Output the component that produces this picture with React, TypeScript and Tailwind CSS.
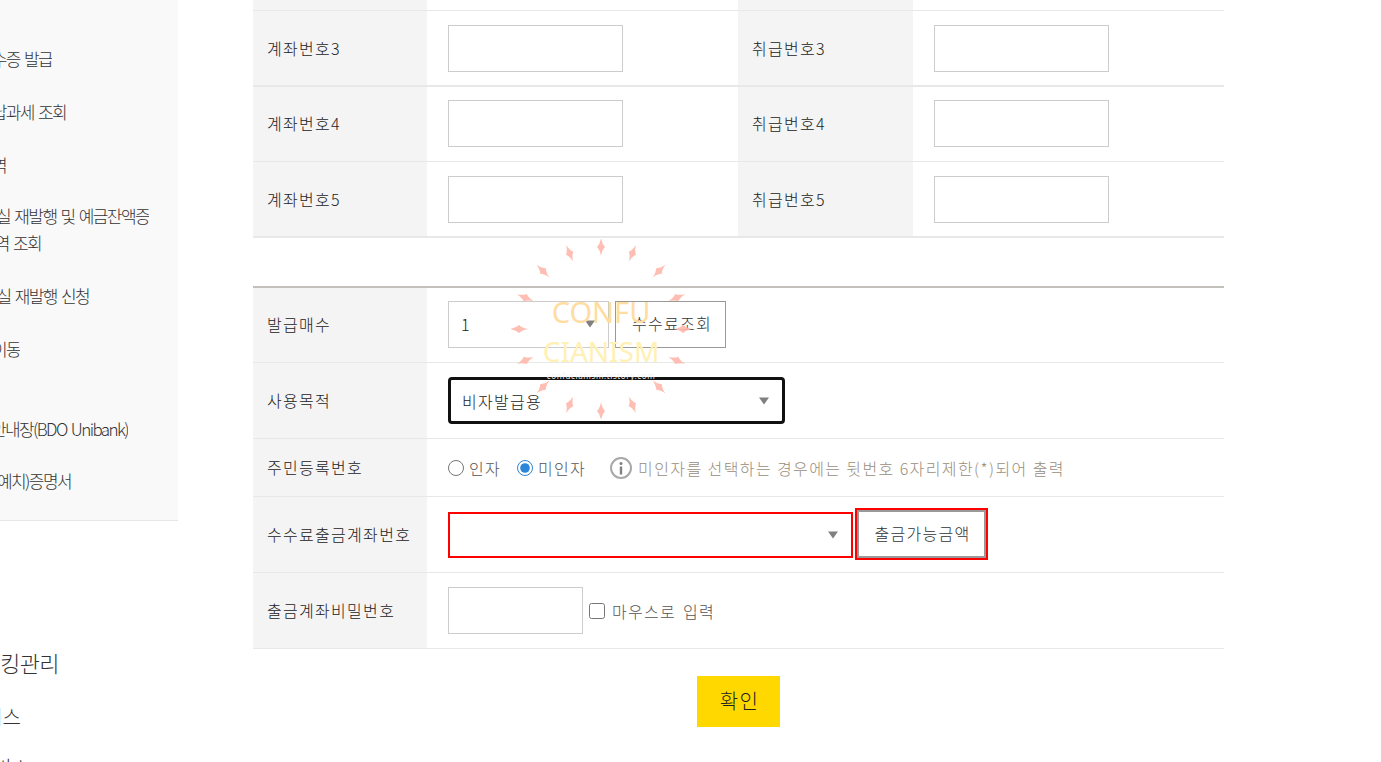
const kr = "font-['Noto_Sans_CJK_KR','Noto_Sans',sans-serif]";

function Caret() {
  return (
    <svg width="10" height="8" viewBox="0 0 10 8" className="shrink-0">
      <path d="M0 0.5h10L5 7.5z" fill="#808080" />
    </svg>
  );
}

function SideItem({ w, text, className }: { w: string; text: string; className: string }) {
  return (
    <div className={`flex justify-end overflow-hidden whitespace-nowrap ${w} ${className}`}>
      <span className="shrink-0">{text}</span>
    </div>
  );
}

function Sidebar() {
  const item =
    "h-[27px] text-[17px] leading-[27px] font-light tracking-[-1.6px] [word-spacing:2px] text-[#333333]";
  return (
    <div className="w-[178px] shrink-0 overflow-hidden">
      <div className="flex h-[521px] flex-col border-b border-[#e6e6e6] bg-[#f9f9f9] pt-[45px]">
        <SideItem w="w-[52px]" text="영수증 발급" className={item} />
        <SideItem w="w-[66px]" text="비과세 납과세 조회" className={`mt-[26px] ${item}`} />
        <SideItem w="w-[6px]" text="내역" className={`mt-[26px] ${item}`} />
        <SideItem w="w-[149px]" text="분실 재발행 및 예금잔액증" className={`mt-[24px] ${item}`} />
        <SideItem w="w-[41px]" text="내역 조회" className={item} />
        <SideItem w="w-[89px]" text="분실 재발행 신청" className={`mt-[26px] ${item}`} />
        <SideItem w="w-[20px]" text="이동" className={`mt-[26px] ${item}`} />
        <SideItem w="w-[128px]" text="안내장(BDO Unibank)" className={`mt-[53px] ${item}`} />
        <SideItem w="w-[71px]" text="(예치)증명서" className={`mt-[25px] ${item}`} />
      </div>
      <SideItem
        w="w-[59px]"
        text="뱅킹관리"
        className="mt-[126px] h-[30px] text-[22px] leading-[30px] font-light tracking-[-0.6px] text-[#333333]"
      />
      <SideItem
        w="w-[21px]"
        text="서비스"
        className="mt-[26px] h-[28px] text-[20px] leading-[28px] font-light text-[#333333]"
      />
      <SideItem
        w="w-[30px]"
        text="서비스"
        className="mt-[23px] h-[28px] text-[20px] leading-[28px] font-light text-[#333333]"
      />
    </div>
  );
}

function Label({ children, wide, up }: { children: React.ReactNode; wide?: boolean; up?: boolean }) {
  return (
    <div
      className={`flex shrink-0 items-center bg-[#f4f4f4] pl-[14px] text-[16px] font-light tracking-[1.3px] text-[#222222] ${
        wide ? "w-[175px]" : "w-[174px]"
      } ${up ? "pb-[2px]" : ""}`}
    >
      {children}
    </div>
  );
}

function AccountRow({ n, h, thick, up }: { n: number; h: string; thick: boolean; up?: boolean }) {
  const nudge = up ? "pb-[1px]" : "";
  return (
    <div className={`flex border-[#e8e8e8] ${h} ${thick ? "border-b-2" : "border-b"}`}>
      <Label up={up}>계좌번호{n}</Label>
      <div className={`flex w-[311px] items-center pl-[21px] ${nudge}`}>
        <input className="h-[47px] w-[175px] border border-[#cccccc] bg-white" />
      </div>
      <Label wide up={up}>취급번호{n}</Label>
      <div className={`flex flex-1 items-center pl-[21px] ${nudge}`}>
        <input className="h-[47px] w-[175px] border border-[#cccccc] bg-white" />
      </div>
    </div>
  );
}

function Row({ label, h, children }: { label: string; h: string; children: React.ReactNode }) {
  return (
    <div className={`flex border-b border-[#e8e8e8] ${h}`}>
      <Label up>{label}</Label>
      <div className="flex flex-1 items-center pl-[21px]">{children}</div>
    </div>
  );
}

function Watermark() {
  const spikes = Array.from({ length: 16 }, (_, i) => i * 22.5);
  return (
    <div className="pointer-events-none absolute top-[239px] left-[511px] flex h-[180px] w-[180px] flex-col items-center">
      <svg width="180" height="180" viewBox="-90 -90 180 180" className="absolute inset-0 opacity-90">
        {spikes.map((a) => (
          <path
            key={a}
            d="M0 -91Q1 -85 4 -82Q1 -79 0 -73Q-1 -79 -4 -82Q-1 -85 0 -91z"
            fill="#ffb8ab"
            transform={`rotate(${a})`}
          />
        ))}
      </svg>
      <div className="relative mt-[55px] text-[29px] leading-[36px] font-['Noto_Sans',sans-serif] text-[#ffdca0]">CONFU</div>
      <div className="relative mt-[3px] text-[28px] leading-[36px] font-['Noto_Sans',sans-serif] text-[#fff0b4]">CIANISM</div>
      <div className="relative mt-[3px] text-[8px] leading-[8px] tracking-[0.6px] text-[#f2f2f2] font-['Noto_Sans',sans-serif]">confucianism.tistory.com</div>
    </div>
  );
}

export default function App() {
  const body = "text-[16px] font-light tracking-[1.3px]";
  return (
    <div className={`relative flex h-[762px] w-[1381px] overflow-hidden bg-white ${kr}`}>
      <Sidebar />
      <main className="ml-[75px] w-[971px]">
        <div className="flex h-[11px] border-b border-[#e8e8e8]">
          <div className="w-[174px] bg-[#f4f4f4]" />
          <div className="w-[311px]" />
          <div className="w-[175px] bg-[#f4f4f4]" />
        </div>
        <AccountRow n={3} h="h-[76px]" thick />
        <AccountRow n={4} h="h-[75px]" thick={false} up />
        <AccountRow n={5} h="h-[76px]" thick />

        <div className="mt-[48px] border-t-2 border-[#c4c0bc]">
          <Row label="발급매수" h="h-[75px]">
            <div className={`mb-[2px] flex h-[47px] w-[161px] items-center justify-between border border-[#cccccc] pr-[13px] pl-[12px] text-[#222222] ${body}`}>
              <span>1</span>
              <Caret />
            </div>
            <button className={`mb-[2px] ml-[6px] h-[47px] w-[111px] border border-[#999999] pb-[2px] pl-[3px] text-[#333333] ${body}`}>
              수수료조회
            </button>
          </Row>
          <Row label="사용목적" h="h-[76px]">
            <div className={`flex h-[47px] w-[337px] items-center justify-between rounded-[4px] border-[3px] border-[#111111] pr-[13px] pl-[11px] text-[#222222] ${body}`}>
              <span>비자발급용</span>
              <Caret />
            </div>
          </Row>
          <Row label="주민등록번호" h="h-[58px]">
            <label className={`flex items-center gap-[5px] text-[#555555] ${body}`}>
              <input type="radio" name="seal" className="h-4 w-4" />
              인자
            </label>
            <label className={`ml-[16px] flex items-center gap-[5px] text-[#555555] ${body}`}>
              <input type="radio" name="seal" defaultChecked className="h-4 w-4 accent-[#2b86d9]" />
              미인자
            </label>
            <svg width="24" height="24" viewBox="0 0 24 24" className="ml-[23px] shrink-0">
              <circle cx="12" cy="12" r="10" fill="none" stroke="#a8a8a8" strokeWidth="2" />
              <circle cx="12" cy="7.5" r="1.5" fill="#808080" />
              <rect x="10.8" y="10.5" width="2.4" height="8" fill="#808080" />
            </svg>
            <span className="ml-[5px] text-[16px] font-light tracking-[1.4px] whitespace-nowrap text-[#998e7c]">
              미인자를 선택하는 경우에는 뒷번호 6자리제한(*)되어 출력
            </span>
          </Row>
          <Row label="수수료출금계좌번호" h="h-[76px]">
            <div className="flex h-[46px] w-[405px] items-center justify-end border-2 border-[#ff0000] pr-[13px]">
              <Caret />
            </div>
            <button className={`mb-[1px] ml-[2px] h-[52px] w-[133px] border-2 border-[#ff0000] text-[#333333] ${body}`}>
              <span className="flex h-full w-full items-center justify-center border-2 border-[#999999] pb-[2px] pl-[2px]">출금가능금액</span>
            </button>
          </Row>
          <Row label="출금계좌비밀번호" h="h-[76px]">
            <input type="password" className="h-[47px] w-[135px] border border-[#cccccc] bg-white" />
            <label className={`ml-[6px] flex items-center gap-[7px] [word-spacing:2px] text-[#555555] ${body}`}>
              <input type="checkbox" className="h-4 w-4" />
              마우스로 입력
            </label>
          </Row>
        </div>

        <div className="mt-[27px] flex justify-center">
          <button className="h-[51px] w-[83px] bg-[#ffd800] pb-[2px] pl-[2px] text-[20px] font-light tracking-[1.3px] text-[#222222]">확인</button>
        </div>
      </main>
      <Watermark />
    </div>
  );
}
